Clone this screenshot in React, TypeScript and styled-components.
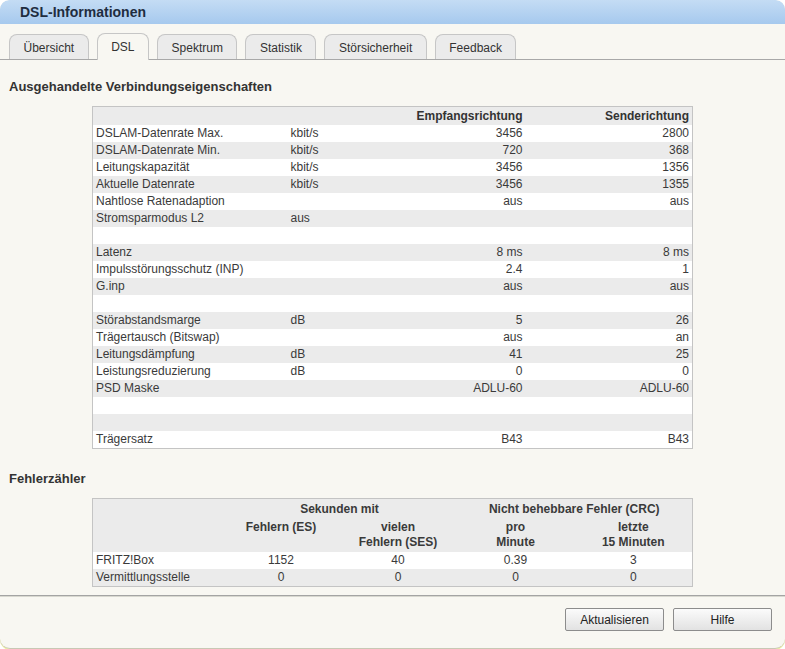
import styled, { createGlobalStyle } from "styled-components";

const GlobalStyle = createGlobalStyle`
  html, body {
    margin: 0;
    padding: 0;
    background: #ffffff;
  }
  body {
    font-family: "Liberation Sans", Arial, sans-serif;
    font-size: 12px;
    color: #333;
  }
`;

interface DslRow {
  label: string;
  unit?: string;
  down?: string;
  up?: string;
}

const dslRows: DslRow[] = [
  { label: "DSLAM-Datenrate Max.", unit: "kbit/s", down: "3456", up: "2800" },
  { label: "DSLAM-Datenrate Min.", unit: "kbit/s", down: "720", up: "368" },
  { label: "Leitungskapazität", unit: "kbit/s", down: "3456", up: "1356" },
  { label: "Aktuelle Datenrate", unit: "kbit/s", down: "3456", up: "1355" },
  { label: "Nahtlose Ratenadaption", down: "aus", up: "aus" },
  { label: "Stromsparmodus L2", unit: "aus" },
  { label: "" },
  { label: "Latenz", down: "8 ms", up: "8 ms" },
  { label: "Impulsstörungsschutz (INP)", down: "2.4", up: "1" },
  { label: "G.inp", down: "aus", up: "aus" },
  { label: "" },
  { label: "Störabstandsmarge", unit: "dB", down: "5", up: "26" },
  { label: "Trägertausch (Bitswap)", down: "aus", up: "an" },
  { label: "Leitungsdämpfung", unit: "dB", down: "41", up: "25" },
  { label: "Leistungsreduzierung", unit: "dB", down: "0", up: "0" },
  { label: "PSD Maske", down: "ADLU-60", up: "ADLU-60" },
  { label: "" },
  { label: "" },
  { label: "Trägersatz", down: "B43", up: "B43" },
];

const errorRows = [
  { label: "FRITZ!Box", es: "1152", ses: "40", perMin: "0.39", last15: "3" },
  { label: "Vermittlungsstelle", es: "0", ses: "0", perMin: "0", last15: "0" },
];

const tabs = ["Übersicht", "DSL", "Spektrum", "Statistik", "Störsicherheit", "Feedback"];

export default function App() {
  return (
    <>
      <GlobalStyle />
      <Panel>
        <TitleBar>
          <Title>DSL-Informationen</Title>
        </TitleBar>

        <TabBar>
          {tabs.map((t) => (
            <Tab key={t} $active={t === "DSL"}>
              {t}
            </Tab>
          ))}
        </TabBar>

        <Content>
          <SectionTitle>Ausgehandelte Verbindungseigenschaften</SectionTitle>
          <DataTable>
            <colgroup>
              <col style={{ width: 195 }} />
              <col style={{ width: 71 }} />
              <col style={{ width: 167 }} />
              <col style={{ width: 167 }} />
            </colgroup>
            <thead>
              <HeadRow>
                <HeadCell />
                <HeadCell />
                <HeadCell $align="right">Empfangsrichtung</HeadCell>
                <HeadCell $align="right">Senderichtung</HeadCell>
              </HeadRow>
            </thead>
            <tbody>
              {dslRows.map((r, i) => (
                <BodyRow key={i} $odd={i % 2 === 1}>
                  <Cell>{r.label}</Cell>
                  <Cell>{r.unit}</Cell>
                  <Cell $align="right">{r.down}</Cell>
                  <Cell $align="right">{r.up}</Cell>
                </BodyRow>
              ))}
            </tbody>
          </DataTable>

          <SectionTitle $spaced>Fehlerzähler</SectionTitle>
          <DataTable>
            <colgroup>
              <col style={{ width: 130 }} />
              <col style={{ width: 117 }} />
              <col style={{ width: 117 }} />
              <col style={{ width: 118 }} />
              <col style={{ width: 118 }} />
            </colgroup>
            <thead>
              <HeadRow>
                <GroupCell />
                <GroupCell colSpan={2}>Sekunden mit</GroupCell>
                <GroupCell colSpan={2}>Nicht behebbare Fehler (CRC)</GroupCell>
              </HeadRow>
              <HeadRow>
                <SubHeadCell />
                <SubHeadCell>Fehlern (ES)</SubHeadCell>
                <SubHeadCell>
                  vielen
                  <br />
                  Fehlern (SES)
                </SubHeadCell>
                <SubHeadCell>
                  pro
                  <br />
                  Minute
                </SubHeadCell>
                <SubHeadCell>
                  letzte
                  <br />
                  15 Minuten
                </SubHeadCell>
              </HeadRow>
            </thead>
            <tbody>
              {errorRows.map((r, i) => (
                <BodyRow key={r.label} $odd={i % 2 === 1}>
                  <Cell>{r.label}</Cell>
                  <Cell $align="center">{r.es}</Cell>
                  <Cell $align="center">{r.ses}</Cell>
                  <Cell $align="center">{r.perMin}</Cell>
                  <Cell $align="center">{r.last15}</Cell>
                </BodyRow>
              ))}
            </tbody>
          </DataTable>
        </Content>

        <Footer>
          <Button>Aktualisieren</Button>
          <Button>Hilfe</Button>
        </Footer>
      </Panel>
    </>
  );
}

const Panel = styled.div`
  width: 785px;
  height: 648px;
  background: #f8f7f2;
  border-radius: 9px 9px 10px 10px;
  border-bottom: 1px solid #c8c8b4;
  box-shadow: 0 1px 0 #eeeea0;
  overflow: hidden;
  display: flex;
  flex-direction: column;
`;

const TitleBar = styled.div`
  height: 24px;
  display: flex;
  align-items: center;
  padding-left: 20px;
  background: linear-gradient(#c4dcf4, #a6c9ee);
  border-radius: 9px 9px 0 0;
`;

const Title = styled.div`
  font-size: 14px;
  font-weight: bold;
  color: #1f2d3f;
`;

const TabBar = styled.div`
  height: 36px;
  display: flex;
  align-items: flex-end;
  gap: 8px;
  padding-left: 9px;
  border-bottom: 1px solid #a8a8a8;
  box-sizing: border-box;
`;

const Tab = styled.div<{ $active?: boolean }>`
  height: ${(p) => (p.$active ? "27px" : "25px")};
  padding: 0 13.5px;
  display: flex;
  align-items: center;
  justify-content: center;
  box-sizing: border-box;
  border: 1px solid #c6c6c6;
  border-bottom: none;
  border-radius: 8px 8px 0 0;
  background: ${(p) => (p.$active ? "#f8f7f2" : "#ebebeb")};
  margin-bottom: ${(p) => (p.$active ? "-1px" : "0")};
  font-size: 12px;
  color: #333;
  padding-top: ${(p) => (p.$active ? "0" : "1px")};
`;

const Content = styled.div`
  flex: 1;
  padding-top: 19px;
`;

const SectionTitle = styled.div<{ $spaced?: boolean }>`
  font-size: 13px;
  font-weight: bold;
  line-height: 16px;
  color: #333;
  padding-left: 9px;
  margin-top: ${(p) => (p.$spaced ? "22px" : "0")};
  margin-bottom: 11px;
`;

const DataTable = styled.table`
  width: 600px;
  margin-left: 92px;
  border-collapse: collapse;
  table-layout: fixed;
  border: 1px solid #c4c4c4;
  font-size: 12px;
  color: #3a3a3a;
`;

const HeadRow = styled.tr`
  background: #ebebeb;
`;

const HeadCell = styled.th<{ $align?: string }>`
  height: 18px;
  padding: 0 3px;
  font-weight: bold;
  color: #333;
  text-align: ${(p) => p.$align || "left"};
  line-height: 18px;
`;

const GroupCell = styled.th`
  height: 20px;
  padding: 0 3px;
  font-weight: bold;
  color: #3a3a3a;
  text-align: center;
  line-height: 20px;
`;

const SubHeadCell = styled.th`
  height: 29px;
  padding: 1px 3px 2px;
  font-weight: bold;
  color: #3a3a3a;
  text-align: center;
  vertical-align: top;
  line-height: 15px;
`;

const BodyRow = styled.tr<{ $odd?: boolean }>`
  background: ${(p) => (p.$odd ? "#ebebeb" : "#ffffff")};
`;

const Cell = styled.td<{ $align?: string }>`
  height: 17px;
  padding: 0 3px;
  line-height: 17px;
  text-align: ${(p) => p.$align || "left"};
  white-space: nowrap;
  overflow: hidden;
`;

const Footer = styled.div`
  height: 53px;
  border-top: 1px solid #a4a4a4;
  box-shadow: inset 0 1px 0 #d8d8d0;
  display: flex;
  justify-content: flex-end;
  align-items: flex-start;
  gap: 9px;
  padding: 12px 13px 0 0;
  box-sizing: border-box;
`;

const Button = styled.button`
  width: 99px;
  height: 23px;
  border: 1px solid #8c8c8c;
  border-radius: 2px;
  background: linear-gradient(#fbfbfb, #e2e2e2);
  font-family: "Liberation Sans", Arial, sans-serif;
  font-size: 12px;
  color: #222;
  padding: 0;
  cursor: pointer;
`;
